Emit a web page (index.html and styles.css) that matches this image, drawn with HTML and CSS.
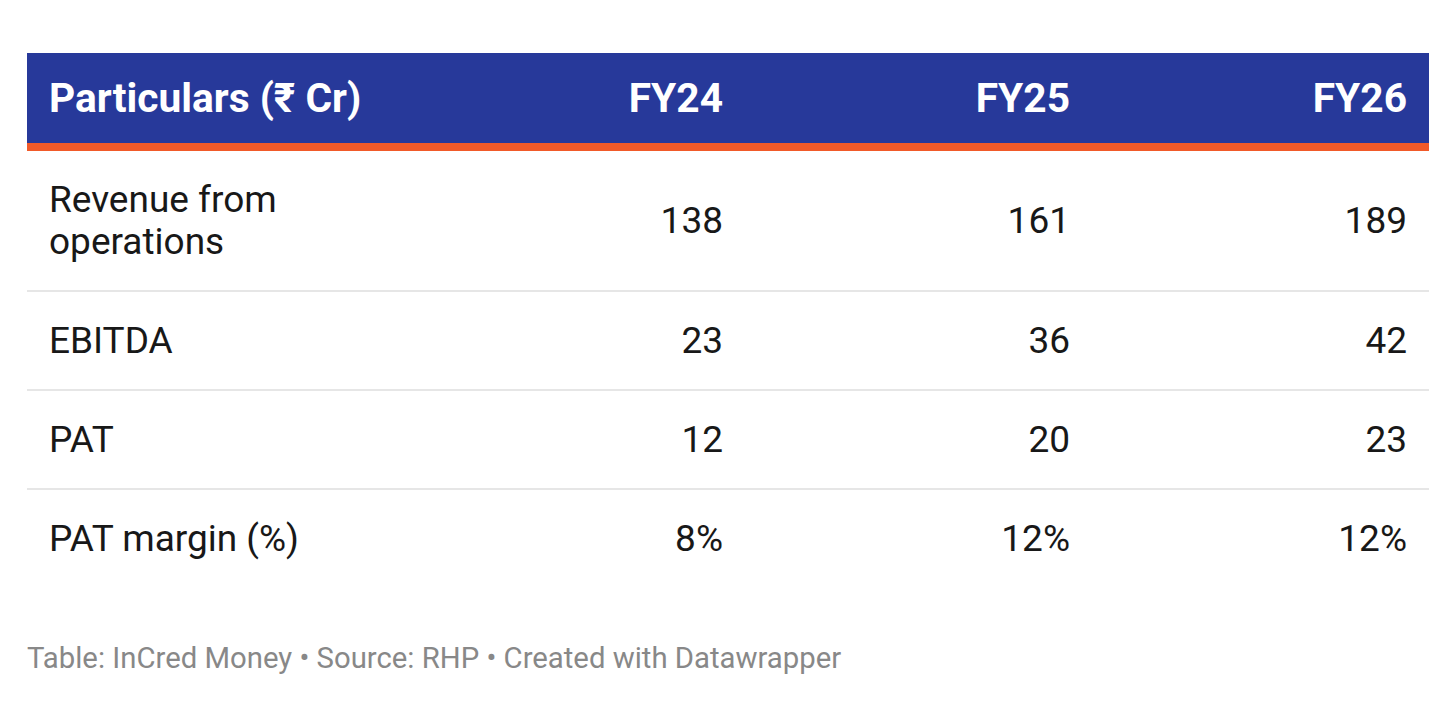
FILE: index.html
```html
<!DOCTYPE html>
<html lang="en">
<head>
<meta charset="utf-8">
<title>Particulars table</title>
<link rel="stylesheet" href="styles.css">
</head>
<body>
<div class="page">
  <table class="fin">
    <colgroup>
      <col class="c1">
      <col class="c2">
      <col class="c3">
      <col class="c4">
    </colgroup>
    <thead>
      <tr>
        <th class="lbl">Particulars (₹ Cr)</th>
        <th class="num">FY24</th>
        <th class="num">FY25</th>
        <th class="num">FY26</th>
      </tr>
    </thead>
    <tbody>
      <tr>
        <td class="lbl">Revenue from operations</td>
        <td class="num">138</td>
        <td class="num">161</td>
        <td class="num">189</td>
      </tr>
      <tr>
        <td class="lbl">EBITDA</td>
        <td class="num">23</td>
        <td class="num">36</td>
        <td class="num">42</td>
      </tr>
      <tr>
        <td class="lbl">PAT</td>
        <td class="num">12</td>
        <td class="num">20</td>
        <td class="num">23</td>
      </tr>
      <tr>
        <td class="lbl">PAT margin (%)</td>
        <td class="num">8%</td>
        <td class="num">12%</td>
        <td class="num">12%</td>
      </tr>
    </tbody>
  </table>
  <p class="notes">Table: InCred Money • Source: RHP • Created with Datawrapper</p>
</div>
</body>
</html>
```

FILE: styles.css
```css
html, body {
  margin: 0;
  padding: 0;
  background: #ffffff;
}

body {
  font-family: Roboto, "Liberation Sans", Arial, sans-serif;
  color: #181818;
}

.page {
  padding: 53px 27px 0 27px;
}

.fin {
  width: 1402px;
  border-collapse: collapse;
  table-layout: fixed;
}

.c1 { width: 368px; }
.c2 { width: 350px; }
.c3 { width: 347px; }
.c4 { width: 337px; }

.fin th {
  background: #27399a;
  color: #ffffff;
  font-weight: 700;
  font-size: 40.7px;
  line-height: 40px;
  padding: 25px 22px;
  border-bottom: 8px solid #f15a29;
  vertical-align: middle;
}

.fin td {
  font-size: 37px;
  line-height: 42px;
  padding: 28px 22px 27px 22px;
  border-bottom: 2px solid #e6e6e6;
  vertical-align: middle;
}

.fin tbody tr:last-child td {
  border-bottom: none;
}

.lbl {
  text-align: left;
}

.num {
  text-align: right;
}

.notes {
  margin: 54px 0 0 0;
  font-size: 29.3px;
  line-height: 34px;
  color: #888888;
}
```
